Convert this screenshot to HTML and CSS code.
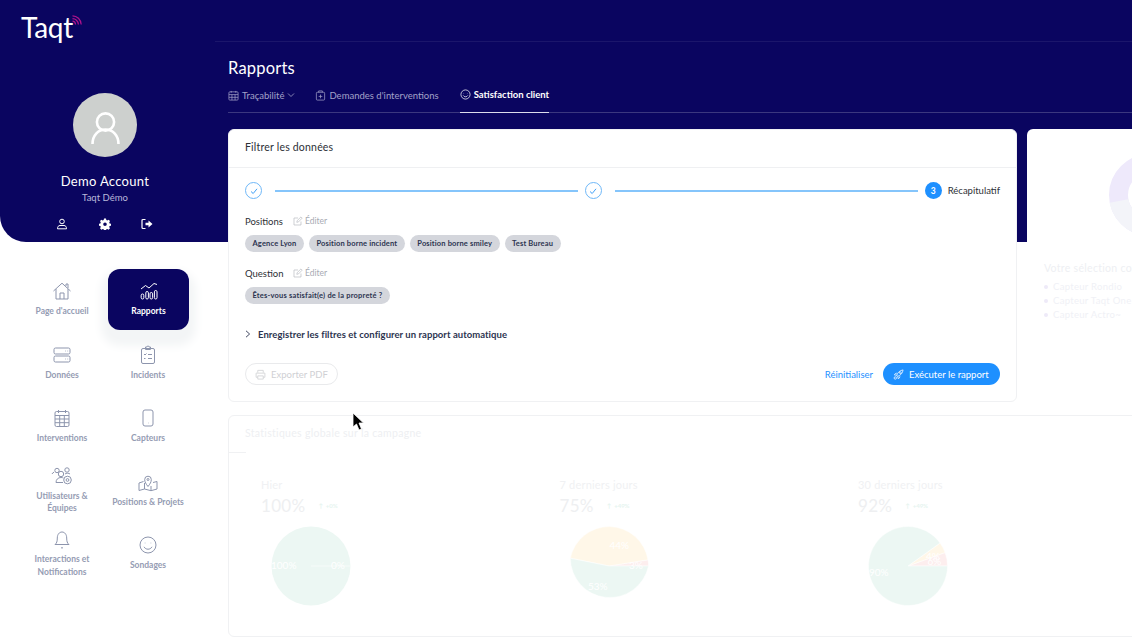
FILE: index.html
```html
<!DOCTYPE html>
<html lang="fr">
<head>
    <meta charset="UTF-8">
    <meta name="viewport" content="width=device-width, initial-scale=1.0">
    <title>Taqt - Rapports</title>
    <link rel="stylesheet" href="styles.css">
</head>
<body>
    <div class="band"></div>
    <div class="app">
        <aside class="sidebar">
            <div class="profile">
                <div class="logo">
                    <span class="logo-text">Taqt</span>
                    <svg class="logo-waves" viewBox="0 0 10 10" width="10" height="10" fill="none" stroke="#b1128c" stroke-width="1.2"><path d="M0.5 0.8C5 0.8 9 4.5 9.2 9.5"/><path d="M0.5 3.6C3.5 3.6 6.2 6 6.4 9.5"/><path d="M0.5 6.2C2 6.2 3.4 7.6 3.6 9.5"/></svg>
                </div>
                <div class="avatar">
                    <svg viewBox="0 0 64 64" width="64" height="64" fill="none" stroke="#fff" stroke-width="2.6"><circle cx="32.5" cy="29" r="8.6"/><path d="M19.5 51c0-8.500 5.500-14.500 13-14.500s13 6 13 14.500"/></svg>
                </div>
                <div class="profile-name">Demo Account</div>
                <div class="profile-org">Taqt Démo</div>
                <div class="profile-actions">
                    <svg viewBox="0 0 12 12" width="12" height="12" fill="none" stroke="#fff" stroke-width="1"><circle cx="6" cy="3.500" r="2.300"/><path d="M1.500 10.800c0-2.200 1-3.300 2.500-3.300h4c1.500 0 2.500 1.100 2.500 3.300z"/></svg>
                    <svg viewBox="0 0 12 12" width="12" height="12"><path fill="#fff" fill-rule="evenodd" d="M5 .6h2l.3 1.500 1 .4 1.300-.8 1.400 1.400-.8 1.300.4 1 1.500.3v2l-1.500.3-.4 1 .8 1.300-1.400 1.400-1.300-.8-1 .4-.3 1.500H5l-.3-1.500-1-.4-1.300.8L1 10.300l.8-1.300-.4-1-1.500-.3v-2l1.500-.3.4-1L1 3.100l1.400-1.400 1.300.8 1-.4zM6 4.400a1.800 1.800 0 1 0 0 3.600 1.800 1.800 0 0 0 0-3.600z"/></svg>
                    <svg viewBox="0 0 12 12" width="12" height="12" fill="none" stroke="#fff" stroke-width="1.200"><path d="M4.500 1.500H2a1 1 0 0 0-1 1v7a1 1 0 0 0 1 1h2.500"/><path fill="#fff" stroke="none" d="M4.500 4.800h3V2.600L11.500 6l-4 3.400V7.200h-3z"/></svg>
                </div>
            </div>
            <nav class="nav-grid">
                <a class="nav-item">
                    <svg class="nav-icon" viewBox="0 0 20 20"><path d="M1.500 10L10 2.200 18.500 10"/><path d="M4 8v10h12V8"/><path d="M8 18v-6h4v6"/><path d="M14 5V3h2v4"/></svg>
                    <span>Page d'accueil</span>
                </a>
                <a class="nav-item active">
                    <svg class="nav-icon" viewBox="0 0 20 20"><path d="M2 8l4.500-3.500 3.500 2.500 5-4.500 3 1"/><rect x="2.200" y="13" width="2.600" height="5" rx="1.300"/><rect x="6.800" y="10.500" width="2.600" height="7.500" rx="1.300"/><rect x="11" y="11.500" width="2.600" height="6.500" rx="1.300"/><rect x="15.400" y="9.500" width="2.600" height="8.500" rx="1.300"/></svg>
                    <span>Rapports</span>
                </a>
                <a class="nav-item">
                    <svg class="nav-icon" viewBox="0 0 20 20"><rect x="2" y="3" width="16" height="6" rx="1.500"/><rect x="2" y="11" width="16" height="6" rx="1.500"/><path d="M13 6h.6M15.500 6h.6M13 14h.6M15.500 14h.6"/></svg>
                    <span>Données</span>
                </a>
                <a class="nav-item">
                    <svg class="nav-icon" viewBox="0 0 20 20"><rect x="3.500" y="3.500" width="13" height="15" rx="1.500"/><path d="M7.500 3.500V2h1.500a1 1 0 0 1 2 0h1.500v2.500h-5z"/><path d="M6 9l1 1 1.500-1.500M10 9.500h4M6 13.500h1.500M10 13.500h4"/></svg>
                    <span>Incidents</span>
                </a>
                <a class="nav-item">
                    <svg class="nav-icon" viewBox="0 0 20 20"><rect x="3" y="3.500" width="14" height="15" rx="1.500"/><path d="M6.500 2v3M13.500 2v3M3 7.500h14M3 11h14M3 14.700h14M7.700 7.500v11M12.300 7.500v11"/></svg>
                    <span>Interventions</span>
                </a>
                <a class="nav-item">
                    <svg class="nav-icon" viewBox="0 0 20 20"><rect x="5" y="2" width="10" height="16" rx="2"/><path d="M10 15h.4"/></svg>
                    <span>Capteurs</span>
                </a>
                <a class="nav-item">
                    <svg class="nav-icon wide" viewBox="0 0 22 20"><circle cx="6" cy="4.500" r="2.200"/><circle cx="16" cy="4" r="2.200"/><circle cx="10" cy="8" r="2.700"/><path d="M1 8c.5-1 1.200-1.500 2-1.800M5 16.500c0-3 2-5 5-5 1 0 2 .2 2.500.6M5 16.500h7"/><circle cx="16.500" cy="14" r="3.800"/><circle cx="16.500" cy="14" r="1.400"/><path d="M14 8c1-1 4-1 5 0"/></svg>
                    <span>Utilisateurs &amp;<br>Équipes</span>
                </a>
                <a class="nav-item">
                    <svg class="nav-icon wide" viewBox="0 0 22 20"><path d="M6.500 9.500L2 11v7.500L7.500 17l6.500 1.700 6-1.700V9.500l-4 1"/><path d="M7.500 11v6M14 14v4.500"/><path d="M11 14.500C9 12 7.700 10 7.700 7.500a3.300 3.300 0 0 1 6.600 0C14.300 10 13 12 11 14.500z"/><circle cx="11" cy="7.500" r="1"/></svg>
                    <span>Positions &amp; Projets</span>
                </a>
                <a class="nav-item">
                    <svg class="nav-icon" viewBox="0 0 20 20"><path d="M3 15.500c1.800-1.500 2.300-3 2.300-6.500 0-3.500 2-6 4.700-6s4.700 2.500 4.700 6c0 3.500.5 5 2.300 6.500z"/><path d="M9 18.500l1 .7 1-.7"/></svg>
                    <span>Interactions et<br>Notifications</span>
                </a>
                <a class="nav-item">
                    <svg class="nav-icon" viewBox="0 0 20 20"><circle cx="10" cy="10" r="8"/><path d="M6.800 8h.5M12.700 8h.5"/><path d="M6 11.800c1 1.700 2.400 2.400 4 2.400s3-.7 4-2.400"/></svg>
                    <span>Sondages</span>
                </a>
            </nav>
        </aside>

        <main class="main">
            <div class="top-line"></div>
            <h1 class="page-title">Rapports</h1>
            <div class="tabs">
                <a class="tab first">
                    <svg class="tab-icon" viewBox="0 0 12 12"><rect x="1" y="2" width="10" height="9" rx="1"/><path d="M1 5h10M1 8h10M4.300 5v6M7.700 5v6M3.500 1v2M8.500 1v2"/></svg>
                    <span>Traçabilité</span>
                    <svg class="tab-chevron" viewBox="0 0 8 8"><path d="M1 2.500l3 3 3-3"/></svg>
                </a>
                <a class="tab">
                    <svg class="tab-icon" viewBox="0 0 12 12"><rect x="1.500" y="2.500" width="9" height="8.500" rx="1"/><path d="M4 2.500V1h4v1.500M4 7h4M6 5v4"/></svg>
                    <span>Demandes d'interventions</span>
                </a>
                <a class="tab active">
                    <svg class="tab-icon" viewBox="0 0 12 12"><circle cx="6" cy="6" r="5"/><path d="M4 4.800h.4M7.600 4.800h.4M3.500 7c.6 1 1.500 1.500 2.500 1.500S7.900 8 8.500 7"/></svg>
                    <span>Satisfaction client</span>
                </a>
            </div>

            <div class="cards-row">
                <section class="card filter-card">
                    <div class="card-header">Filtrer les données</div>
                    <div class="card-body">
                        <div class="stepper">
                            <span class="step-done"><svg viewBox="0 0 10 10" width="10" height="10" fill="none" stroke="#2b95f5" stroke-width=".9"><path d="M2 5.500l2.200 2L8 2.800"/></svg></span>
                            <span class="step-line"></span>
                            <span class="step-done"><svg viewBox="0 0 10 10" width="10" height="10" fill="none" stroke="#2b95f5" stroke-width=".9"><path d="M2 5.500l2.200 2L8 2.800"/></svg></span>
                            <span class="step-line"></span>
                            <span class="step-current">3</span>
                            <span class="step-label">Récapitulatif</span>
                        </div>

                        <div class="field-title">
                            <span class="field-name">Positions</span>
                            <svg class="edit-icon" viewBox="0 0 10 10"><path d="M8 5.500V9H1V2h4"/><path d="M3.800 6.300l.4-1.700L8 .9l1.200 1.200-3.700 3.800z"/></svg>
                            <span class="edit-text">Éditer</span>
                        </div>
                        <div class="chips">
                            <span class="chip">Agence Lyon</span>
                            <span class="chip">Position borne incident</span>
                            <span class="chip">Position borne smiley</span>
                            <span class="chip">Test Bureau</span>
                        </div>

                        <div class="field-title second">
                            <span class="field-name">Question</span>
                            <svg class="edit-icon" viewBox="0 0 10 10"><path d="M8 5.500V9H1V2h4"/><path d="M3.800 6.300l.4-1.700L8 .9l1.200 1.200-3.700 3.800z"/></svg>
                            <span class="edit-text">Éditer</span>
                        </div>
                        <div class="chips">
                            <span class="chip long">Êtes-vous satisfait(e) de la propreté ?</span>
                        </div>

                        <div class="accordion">
                            <svg viewBox="0 0 6 8" width="6" height="8" fill="none" stroke="#2c3450" stroke-width=".9"><path d="M1 .8L4.600 4 1 7.200"/></svg>
                            <span>Enregistrer les filtres et configurer un rapport automatique</span>
                        </div>

                        <div class="actions">
                            <button class="btn-export">
                                <svg viewBox="0 0 12 12" width="11" height="11" fill="none" stroke="#d4d5d8" stroke-width="1"><path d="M3 4V1.500h6V4M3 9H1.200V4.500h9.600V9H9"/><path d="M3 7.500h6V11H3z"/></svg>
                                Exporter PDF
                            </button>
                            <a class="btn-reset">Réinitialiser</a>
                            <button class="btn-run">
                                <svg viewBox="0 0 12 12" width="11" height="11" fill="none" stroke="#fff" stroke-width=".8"><path d="M4 7.500C4.500 4.500 7 1.500 11 1c-.3 4-3.500 6.300-6 7z"/><circle cx="8" cy="4" r="1"/><path d="M4.200 4.500L2.500 5 1.500 6.500 4 6.700M7.500 8L7 9.800 5.500 10.500 5.300 8.200"/><circle cx="2.500" cy="9.800" r="1.300"/></svg>
                                Exécuter le rapport
                            </button>
                        </div>
                    </div>
                </section>

                <section class="card side-card">
                    <svg class="donut" viewBox="0 0 84 84" width="84" height="84" fill="none" stroke-width="19">
                        <circle cx="42" cy="42" r="31.500" stroke="#eee9fb"/>
                        <path d="M11 48a31.500 31.500 0 0 0 50 19" stroke="#f3f4f9"/>
                    </svg>
                    <div class="side-title">Votre sélection comprend</div>
                    <ul class="side-list">
                        <li>Capteur Rondio</li>
                        <li>Capteur Taqt One</li>
                        <li>Capteur Actro~</li>
                    </ul>
                </section>
            </div>

            <section class="card stats-card">
                <div class="stats-title">Statistiques globale sur la campagne</div>
                <div class="stats-grid">
                    <div class="stat">
                        <div class="stat-label">Hier</div>
                        <div class="stat-value"><span class="stat-number">100%</span><span class="stat-delta">↑ &nbsp;+0%</span></div>
                        <svg class="pie" viewBox="-40 -40 80 80" width="80" height="80">
                            <circle r="39.500" fill="#ecf7f3"/>
                            <path d="M0 0H39.500" stroke="#fff" stroke-width=".6"/>
                            <text x="-40" y="3">100%</text>
                            <text x="20" y="3">0%</text>
                        </svg>
                    </div>
                    <div class="stat">
                        <div class="stat-label">7 derniers jours</div>
                        <div class="stat-value"><span class="stat-number">75%</span><span class="stat-delta">↑ &nbsp;+49%</span></div>
                        <svg class="pie" viewBox="-40 -40 80 80" width="80" height="80">
                            <path d="M0 0L39.500 0A39.500 39.500 0 0 0 39 -6.200z" fill="#fdeeee" stroke="#fff" stroke-width=".5"/>
                            <path d="M0 0L39 -6.200A39.500 39.500 0 0 0 -38.700 -7.800z" fill="#fff7e8" stroke="#fff" stroke-width=".5"/>
                            <path d="M0 0L-38.700 -7.800A39.500 39.500 0 0 0 39.500 0z" fill="#ecf7f3" stroke="#fff" stroke-width=".5"/>
                            <text x="0.500" y="-17">44%</text>
                            <text x="20" y="2.500">3%</text>
                            <text x="-21" y="23.500">53%</text>
                        </svg>
                    </div>
                    <div class="stat">
                        <div class="stat-label">30 derniers jours</div>
                        <div class="stat-value"><span class="stat-number">92%</span><span class="stat-delta">↑ &nbsp;+49%</span></div>
                        <svg class="pie" viewBox="-40 -40 80 80" width="80" height="80">
                            <path d="M0 0L39.500 0A39.500 39.500 0 0 0 37.100 -13.500z" fill="#fdeeee" stroke="#fff" stroke-width=".5"/>
                            <path d="M0 0L37.100 -13.500A39.500 39.500 0 0 0 32.100 -23z" fill="#fff7e8" stroke="#fff" stroke-width=".5"/>
                            <path d="M0 0L32.100 -23A39.500 39.500 0 1 0 39.500 0z" fill="#ecf7f3" stroke="#fff" stroke-width=".5"/>
                            <text x="18" y="-6">4%</text>
                            <text x="19.500" y="-1">6%</text>
                            <text x="-39" y="9.500">90%</text>
                        </svg>
                    </div>
                </div>
            </section>
        </main>
    </div>

    <svg class="cursor" viewBox="0 0 14 20" width="14" height="20"><path d="M1 1v14l3.500-3 2.500 6 2.500-1-2.500-6h4.500z" fill="#000" stroke="#fff" stroke-width=".8"/></svg>
</body>
</html>
```

FILE: styles.css
```css
html, body {
    margin: 0;
    padding: 0;
    height: 642px;
    overflow: hidden;
    background: #ffffff;
    font-family: "Lato", "Noto Sans", sans-serif;
}

/* bandeau bleu derriere le haut de page */
.band {
    position: absolute;
    top: 0;
    left: 0;
    right: 0;
    height: 242px;
    background: #0a0560;
    border-bottom-left-radius: 26px;
}

.app {
    position: relative;
    display: grid;
    grid-template-columns: 215px 1fr;
    width: 1132px;
    height: 642px;
    overflow: hidden;
}

/* colonne gauche */
.profile {
    height: 242px;
    box-sizing: border-box;
    padding-top: 9px;
    display: flex;
    flex-direction: column;
    align-items: center;
    color: #ffffff;
}

.logo {
    align-self: flex-start;
    margin-left: 21px;
    height: 84px;
    display: flex;
    align-items: flex-start;
}

.logo-text {
    font-size: 28px;
    font-weight: 400;
    line-height: 36px;
    letter-spacing: -0.2px;
}

.logo-waves {
    margin: 6px 0 0 -1px;
}

.avatar {
    width: 64px;
    height: 64px;
    border-radius: 50%;
    background: #cdd0ce;
    margin-left: -5px;
}

.profile-name {
    margin: 16px 0 0 -5px;
    font-size: 13px;
    line-height: 17px;
    letter-spacing: 0.3px;
}

.profile-org {
    margin: 1px 0 0 -5px;
    font-size: 9.5px;
    line-height: 14px;
    color: #b9b8da;
}

.profile-actions {
    margin: 13px 0 0 -6px;
    width: 97px;
    display: flex;
    justify-content: space-between;
}

.nav-grid {
    display: grid;
    grid-template-columns: 86px 86px;
    grid-auto-rows: 61px;
    row-gap: 2.5px;
    margin: 27px 0 0 19px;
}

.nav-item {
    display: flex;
    flex-direction: column;
    align-items: center;
    justify-content: center;
    gap: 4px;
    font-size: 8.5px;
    line-height: 12.500px;
    font-weight: 700;
    text-align: center;
    color: #959cb3;
}

.nav-item.active {
    width: 81px;
    margin-left: 3px;
    background: #0a0560;
    border-radius: 12px;
    color: #ffffff;
    box-shadow: 0 9px 10px 7px #f3f5f6;
}

.nav-icon {
    width: 20px;
    height: 20px;
    fill: none;
    stroke: #8d95ad;
    stroke-width: 1;
}

.nav-icon.wide {
    width: 22px;
}

.nav-item.active .nav-icon {
    stroke: #ffffff;
}

/* zone principale */
.main {
    min-width: 0;
    padding-left: 13px;
    position: relative;
}

.top-line {
    height: 41px;
    margin-left: -13px;
    border-bottom: 1px solid rgba(255, 255, 255, 0.07);
}

.page-title {
    margin: 15px 0 0;
    font-size: 16.5px;
    line-height: 22px;
    font-weight: 400;
    letter-spacing: 0.2px;
    color: #ffffff;
}

.tabs {
    margin-top: 5px;
    height: 28px;
    display: flex;
    gap: 21px;
    border-bottom: 1px solid rgba(255, 255, 255, 0.2);
}

.tab {
    display: flex;
    align-items: center;
    gap: 3px;
    height: 29px;
    padding-bottom: 7px;
    box-sizing: border-box;
    font-size: 9.5px;
    font-weight: 400;
    color: #a3a2c8;
}

.tab.first {
    margin-right: -1px;
}

.tab.active {
    border-bottom: 1px solid #dcdcec;
    color: #ffffff;
    font-weight: 700;
}

.tab-icon {
    width: 11px;
    height: 11px;
    fill: none;
    stroke: #a3a2c8;
    stroke-width: 0.8;
}

.tab.active .tab-icon {
    stroke: #ffffff;
}

.tab-chevron {
    width: 8px;
    height: 8px;
    fill: none;
    stroke: #a3a2c8;
    stroke-width: 0.8;
}

.cards-row {
    display: flex;
    gap: 10px;
    margin-top: 16px;
}

.card {
    background: #ffffff;
    border: 1px solid #f0f1f3;
    border-radius: 6px;
    box-sizing: border-box;
    flex: none;
}

.filter-card {
    width: 789px;
    height: 273px;
}

.card-header {
    height: 38px;
    box-sizing: border-box;
    padding: 10px 16px 0;
    font-size: 10.5px;
    line-height: 14px;
    letter-spacing: 0.2px;
    color: #2d3036;
    border-bottom: 1px solid #eff0f2;
}

.card-body {
    padding: 14px 16px 0;
}

.stepper {
    display: flex;
    align-items: center;
    height: 17px;
}

.step-done,
.step-current {
    width: 17px;
    height: 17px;
    box-sizing: border-box;
    border-radius: 50%;
    display: flex;
    align-items: center;
    justify-content: center;
    flex: none;
}

.step-done {
    border: 1px solid #6fb8f8;
}

.step-current {
    background: #1e90ff;
    color: #ffffff;
    font-size: 8.5px;
    font-weight: 700;
}

.step-line {
    flex: 1;
    height: 2px;
    margin: 0 7px 0 13px;
    background: #85c5fb;
}

.step-label {
    margin-left: 6px;
    font-size: 9.5px;
    color: #2d3036;
}

.field-title {
    display: flex;
    align-items: center;
    margin-top: 15px;
    height: 14px;
}

.field-title.second {
    margin-top: 14px;
}

.field-name {
    width: 48px;
    font-size: 9.5px;
    color: #2d3036;
}

.edit-icon {
    width: 10px;
    height: 10px;
    fill: none;
    stroke: #b9bbc2;
    stroke-width: 0.7;
}

.edit-text {
    margin-left: 2px;
    font-size: 8.5px;
    color: #a8abb4;
}

.chips {
    display: flex;
    gap: 5px;
    margin-top: 7px;
}

.chip {
    height: 17px;
    padding: 0 7.500px;
    border-radius: 9px;
    background: #d4d6dc;
    font-size: 7.5px;
    line-height: 17px;
    font-weight: 700;
    letter-spacing: 0.15px;
    color: #2c3450;
}

.chip.long {
    letter-spacing: 0.2px;
}

.accordion {
    display: flex;
    align-items: center;
    gap: 7px;
    margin-top: 23px;
    height: 14px;
    font-size: 9.5px;
    font-weight: 700;
    letter-spacing: 0.05px;
    color: #2c3450;
}

.actions {
    display: flex;
    align-items: center;
    margin-top: 22px;
}

.btn-export,
.btn-run {
    display: flex;
    align-items: center;
    gap: 5px;
    height: 22px;
    border-radius: 11px;
    font-family: inherit;
    font-size: 9.5px;
    white-space: nowrap;
    cursor: pointer;
}

.btn-export {
    width: 93px;
    padding: 0 9px;
    background: #ffffff;
    border: 1px solid #e9eaec;
    color: #cfd0d4;
}

.btn-reset {
    margin-left: auto;
    font-size: 9.5px;
    color: #1e90ff;
}

.btn-run {
    width: 117px;
    margin-left: 10px;
    padding: 0 10px;
    background: #1e90ff;
    border: none;
    color: #ffffff;
}

.side-card {
    width: 300px;
    height: 273px;
    padding: 0 16px;
    position: relative;
    border-color: transparent;
}

.donut {
    position: absolute;
    top: 23px;
    left: 80px;
}

.side-title {
    margin-top: 130px;
    font-size: 10.5px;
    line-height: 16px;
    letter-spacing: 0.3px;
    color: #eeeff3;
}

.side-list {
    margin: 4px 0 0;
    padding: 0 0 0 9px;
    list-style: none;
    font-size: 9.5px;
    line-height: 14px;
    letter-spacing: 0.3px;
    color: #f0f1f6;
}

.side-list li {
    position: relative;
}

.side-list li::before {
    content: "";
    position: absolute;
    left: -9px;
    top: 5px;
    width: 4px;
    height: 4px;
    border-radius: 50%;
    background: #eeeaf8;
}

.stats-card {
    width: 1000px;
    height: 222px;
    margin-top: 13px;
    position: relative;
}

/* petit bout de trait sous le titre */
.stats-card::after {
    content: "";
    position: absolute;
    top: 36px;
    left: 0;
    width: 17px;
    height: 1px;
    background: #f0f1f3;
}

.stats-title {
    padding: 10px 16px 0;
    font-size: 10.5px;
    line-height: 14px;
    letter-spacing: 0.3px;
    color: #eeeff2;
}

.stats-grid {
    display: grid;
    grid-template-columns: repeat(3, 298.500px);
    margin: 38px 0 0 32px;
}

.stat-label {
    font-size: 11px;
    line-height: 14px;
    letter-spacing: 0.2px;
    color: #f0f1f3;
}

.stat-value {
    display: flex;
    align-items: center;
    gap: 13px;
    height: 22px;
    margin-top: 2px;
}

.stat-number {
    font-size: 17px;
    letter-spacing: 0.3px;
    color: #eeeff1;
}

.stat-delta {
    font-size: 6px;
    font-weight: 700;
    color: #e6f4ef;
}

.pie {
    display: block;
    margin: 10px 0 0 9.500px;
}

.pie text {
    font-family: "Lato", "Noto Sans", sans-serif;
    font-size: 10px;
    fill: #ffffff;
}

.cursor {
    position: absolute;
    left: 352px;
    top: 412px;
}
```
